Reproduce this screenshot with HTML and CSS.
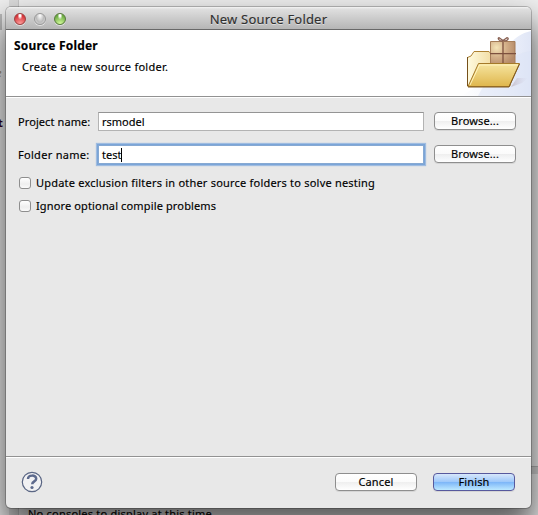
FILE: index.html
```
<!DOCTYPE html>
<html lang="en">
<head>
<meta charset="utf-8">
<title>New Source Folder</title>
<link rel="stylesheet" href="styles.css">
</head>
<body>
<div class="backdrop">
  <div class="rail"></div>
  <div class="editor"></div>
  <div class="console"><span class="console-text">No consoles to display at this time.</span></div>
  <span class="clipped-tab"></span>
  <span class="clipped-quote">e</span>
  <span class="clipped-code">t</span>
</div>
<main class="window">
  <header class="titlebar">
    <div class="lights"><i class="light red"></i><i class="light gray"></i><i class="light green"></i></div>
    <h1 class="title">New Source Folder</h1>
  </header>
  <section class="banner">
    <div class="banner-text">
      <h2 class="heading">Source Folder</h2>
      <p class="description">Create a new source folder.</p>
    </div>
    <svg class="banner-art" width="75" height="66" viewBox="0 0 75 66">
      <defs>
        <linearGradient id="swoosh" x1="0" y1="0" x2="1" y2="0"><stop offset="0" stop-color="#fff"/><stop offset=".6" stop-color="#f0f3fb"/><stop offset="1" stop-color="#e0e6f6"/></linearGradient>
        <linearGradient id="front" x1="0" y1="0" x2="0" y2="1"><stop offset="0" stop-color="#f6e5a0"/><stop offset="1" stop-color="#dfb64c"/></linearGradient>
        <linearGradient id="back" x1="0" y1="0" x2="1" y2="0"><stop offset="0" stop-color="#fffbe0"/><stop offset="1" stop-color="#e8c777"/></linearGradient>
        <radialGradient id="box" cx=".25" cy=".25" r=".8"><stop offset="0" stop-color="#f5e5b8"/><stop offset=".5" stop-color="#d3af88"/><stop offset="1" stop-color="#b58a68"/></radialGradient>
        <linearGradient id="shade" x1="0" y1="0" x2="1" y2="0"><stop offset="0" stop-color="#a997a0" stop-opacity=".5"/><stop offset="1" stop-color="#c9c4dc" stop-opacity="0"/></linearGradient>
      </defs>
      <path d="M75 1C62 4 53 12 45 26C35 45 22 58 4 66H75Z" fill="url(#swoosh)"/>
      <path d="M75 21C54 24 34 42 22 66H75Z" fill="#dce3f6" opacity=".5"/>
      <g transform="translate(4 0)">
        <path d="M57 48L68 48L62 53L51 57Z" fill="url(#shade)"/>
        <path d="M7.500 56V27.500L11 26L14 21.500H29L32 25H50V56Z" fill="url(#back)" stroke="#ad8132"/>
        <path d="M7.500 56V27" stroke="#75501a" stroke-width="1"/>
        <path d="M30.500 11.500H55V36H30.500Z" fill="url(#box)" stroke="#a57d58"/>
        <path d="M43 12V36M30 23.700H56" stroke="#7d513e" stroke-width="1.300"/>
        <path d="M43 11C39 11.500 37 8 39 7.700L43 10.500C47 12 50 8 47 7.700L43 10.500" fill="none" stroke="#886052" stroke-width="1.300"/>
        <path d="M8 56.500L18.500 33.500H59.500L49 56.500Z" fill="url(#front)" stroke="#a57a29"/>
        <path d="M10 55L19.500 35H58" fill="none" stroke="#fff3bd"/>
        <path d="M8 57H49L59.500 34" fill="none" stroke="#805b20" stroke-width="1"/>
      </g>
    </svg>
  </section>
  <form class="form">
    <div class="row"><span class="label project">Project name:</span><div class="field"><span class="value rs">rsmodel</span></div><button type="button" class="button"><span class="browse">Browse...</span></button></div>
    <div class="row second"><span class="label folder">Folder name:</span><div class="field focused"><span class="value test">test</span><i class="caret"></i></div><button type="button" class="button"><span class="browse">Browse...</span></button></div>
    <div class="option"><i class="checkbox"></i><span class="label update">Update exclusion filters in other source folders to solve nesting</span></div>
    <div class="option last"><i class="checkbox"></i><span class="label ignore">Ignore optional compile problems</span></div>
  </form>
  <footer class="footer">
    <svg class="help" width="22" height="22" viewBox="0 0 22 22"><circle cx="11" cy="11" r="9.700" fill="#f1f1f3" stroke="#5a6684" stroke-width="1.200"/><path d="M7 8C7 3.500 15.300 3.600 15.200 7.700C15.200 10.500 11.200 10.200 11.200 13.300" fill="none" stroke="#5d6a8d" stroke-width="2.500"/><circle cx="11" cy="16.500" r="1.600" fill="#5d6a8d"/></svg>
    <div class="actions">
      <button type="button" class="button"><span class="cancel">Cancel</span></button>
      <button type="button" class="button primary"><span class="finish">Finish</span></button>
    </div>
  </footer>
</main>
</body>
</html>
```
FILE: styles.css
```
* { box-sizing: border-box; }
body { margin: 0; width: 538px; height: 515px; overflow: hidden; position: relative; font: 11px/16px "Noto Sans", sans-serif; color: #000; -webkit-text-stroke: .15px currentColor; }
h1, h2, p { margin: 0; }
span { white-space: nowrap; }
.backdrop { position: absolute; inset: 0; background: #f0f0f0; overflow: hidden; }
.rail { position: absolute; left: 9px; top: 0; width: 10px; height: 515px; background: #dcdcdc; border-right: 1px solid #c8c8c8; }
.editor { position: absolute; left: 500px; right: 0; top: 466px; height: 8px; background: #d2d2d2; border-top: 1px solid #b5b5b5; }
.console { position: absolute; left: 28px; top: 506px; }
.console-text { letter-spacing: .22px; }
.clipped-tab { position: absolute; left: 0; top: 14px; width: 2px; height: 16px; background: #bdbdbd; }
.clipped-quote { position: absolute; left: -4px; top: 65px; color: #a18b65; font-style: italic; }
.clipped-code { position: absolute; left: -2px; top: 115px; color: #300018; font-weight: 700; }
.window { position: absolute; left: 6px; top: 7px; width: 525px; height: 501px; display: flex; flex-direction: column; background: #e8e8e8; border-radius: 5px; overflow: hidden; box-shadow: 0 0 0 1px rgba(0,0,0,.22), 0 18px 32px 4px rgba(0,0,0,.62); }
.titlebar { height: 23px; flex: none; position: relative; display: flex; align-items: center; justify-content: center; background: linear-gradient(#f4f4f4 0, #dfdfdf 2px, #b5b5b5 100%); border-bottom: 1px solid #686868; }
.lights { position: absolute; left: 8px; top: 6px; display: flex; gap: 8px; }
.light { width: 12px; height: 12px; border-radius: 50%; border: 1px solid; box-shadow: 0 1px 0 rgba(255,255,255,.55); }
.red { border-color: #9c4040; background: radial-gradient(ellipse at 50% 15%, #fff 0 10%, transparent 35%), radial-gradient(circle at 50% 100%, #ffa3a0, #d6353a 75%); }
.gray { border-color: #999; background: radial-gradient(ellipse at 50% 15%, #fff, #bbb 55%, #e5e5e5); }
.green { border-color: #58793d; background: radial-gradient(ellipse at 50% 15%, #fff 0 10%, transparent 35%), radial-gradient(circle at 50% 100%, #d9ffa0, #6dac44 75%); }
.title { font-size: 13px; font-weight: 400; line-height: 22px; color: #303030; padding-top: 2px; letter-spacing: .18px; text-shadow: 0 1px 0 rgba(255,255,255,.5); }
.banner { height: 67px; flex: none; display: flex; justify-content: space-between; background: #fff; border-bottom: 1px solid #929292; }
.banner-text { padding: 7px 0 0 8px; }
.heading { font-size: 12px; line-height: 18px; letter-spacing: .2px; }
.description { margin: 4px 0 0 8px; line-height: 16px; letter-spacing: .25px; }
.form { border-top: 1px solid #fff; flex: 1; padding: 13px 15px 0 12px; }
.row { display: flex; height: 21px; align-items: center; }
.row.second { margin-top: 12px; }
.label { display: block; }
.row .label { width: 80px; letter-spacing: .09px; }
.row .folder { letter-spacing: .3px; }
.option .update { letter-spacing: .21px; }
.option .ignore { letter-spacing: .14px; }
.field { width: 326px; height: 19px; display: flex; align-items: center; padding-left: 3px; background: #fff; border: 1px solid #b3b3b3; border-top: 1px solid #949494; }
.focused { border-color: #86a9d3; box-shadow: 0 0 0 1px #7ba5d8, 0 0 1px 2px #9fbce0; }
.caret { width: 1px; height: 14px; background: #000; }
.button { width: 82px; height: 18px; margin: -1px 0 0 auto; padding: 0; display: flex; align-items: center; justify-content: center; font: inherit; color: #000; border: 1px solid #8e8e8e; border-radius: 4px; background: linear-gradient(#fff 0, #fbfbfb 50%, #efefef 52%, #fff 100%); box-shadow: 0 1px 0 rgba(0,0,0,.08); }
.row .button { margin-top: -2px; }
.browse { letter-spacing: .12px; }
.cancel, .finish { letter-spacing: .15px; }
.option { display: flex; align-items: center; height: 16px; margin: 10px 0 0 1px; }
.option.last { margin-top: 7px; }
.checkbox { width: 12px; height: 12px; margin-right: 5px; border: 1px solid #8e8e8e; border-radius: 3px; background: linear-gradient(#fff, #eee 60%, #fafafa); }
.footer { height: 52px; flex: none; border-top: 1px solid #929292; box-shadow: inset 0 1px 0 #fff; display: flex; align-items: flex-start; justify-content: space-between; padding: 14px 16px 0 15px; }
.actions { display: flex; gap: 16px; padding-top: 3px; }
.primary { border-color: #57599d; background: linear-gradient(#d7e7fb 0, #9ec8fa 48%, #7db6f8 52%, #bce8ff 100%); }
```
